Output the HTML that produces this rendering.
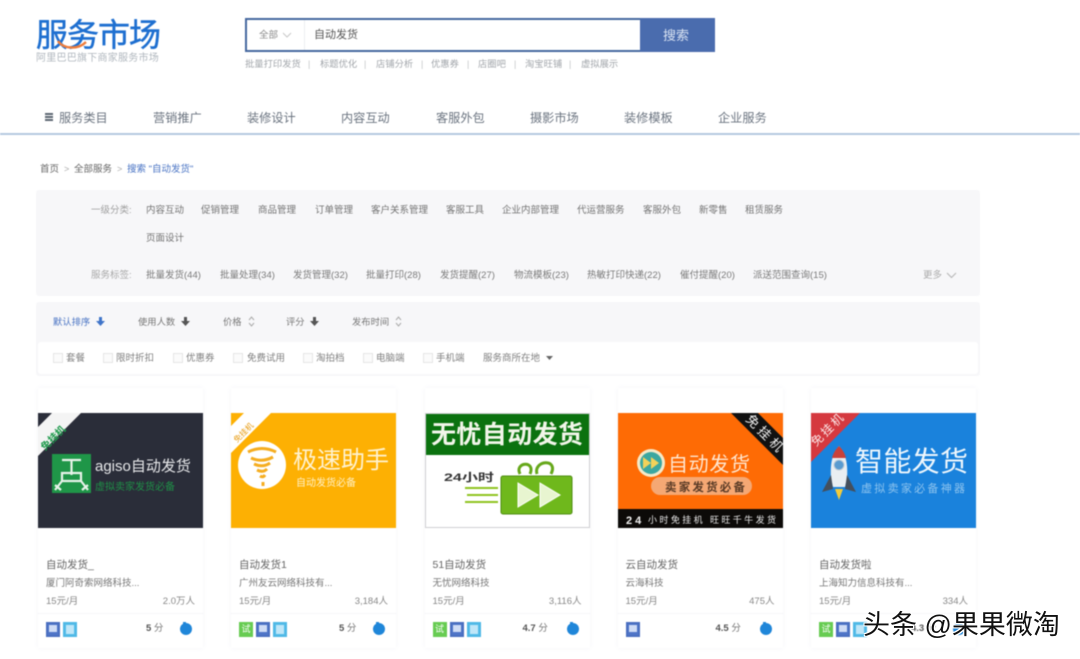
<!DOCTYPE html>
<html lang="zh">
<head>
<meta charset="utf-8">
<style>
html,body{margin:0;padding:0;background:#fff}
#p{position:relative;width:1080px;height:659px;overflow:hidden;background:#fff;font-family:"Liberation Sans","Noto Sans CJK SC",sans-serif;color:#666}
.t{position:absolute;white-space:nowrap;line-height:1}
.b{position:absolute}
.f{filter:blur(.6px)}
.n{font-size:12.2px;color:#6b7480;top:112px}
.h{font-size:9.3px;color:#a2a6ab;top:60px}
.s{font-size:9px;color:#c4c6c9;top:60px}
.c1{font-size:9.500px;color:#747474;top:206px}
.c2{font-size:9.500px;color:#7a7a7a;top:271px}
.o{font-size:9.300px;color:#777;top:318px}
.k{font-size:9.500px;color:#808080;top:354px}
.cb{position:absolute;top:353px;width:8px;height:8px;border:1px solid #e6e6e6;background:#fbfbfb}
.card{position:absolute;top:388px;width:165px;height:260px;background:#fff;box-shadow:0 0 5px #f3f4f8}
.img{position:absolute;left:0;top:25px;width:165px;height:115px;overflow:hidden}
.ti{position:absolute;left:8px;top:172px;font-size:10.500px;color:#666;line-height:1;white-space:nowrap}
.co{position:absolute;left:8px;top:191px;font-size:9.500px;color:#777;line-height:1;white-space:nowrap}
.pr{position:absolute;left:8px;top:209px;font-size:9.500px;color:#888;line-height:1;white-space:nowrap}
.us{position:absolute;right:8px;top:209px;font-size:9.500px;color:#888;line-height:1;white-space:nowrap}
.ln{position:absolute;left:0;right:0;top:225px;height:1px;background:#f6f6f8}
.ic{position:absolute;top:234px;width:14px;height:15px;box-sizing:border-box;line-height:14px;text-align:center;font-size:9px;color:#fff}
.i1{background:#4f75c8;border:2px solid #4a6fc0}
.i1:after,.i2:after{content:"";position:absolute;left:1px;top:1px;width:8px;height:7px;background:#cfdcf5}
.i2{background:#55bde9;border:2px solid #4fb8e6}
.i2:after{background:#bfe6f8;height:9px}
.i3{background:#67cc52}
.sc{position:absolute;top:236px;font-size:9.500px;color:#777;line-height:1;white-space:nowrap}
.sc b{color:#555}
.dot{position:absolute;left:142px;top:235px;width:12px;height:12px;border-radius:50%;background:#1f86d9}
.dot:before{content:"";position:absolute;left:3px;top:-1px;width:3px;height:3px;background:#1f86d9}
svg text{font-family:"Liberation Sans","Noto Sans CJK SC",sans-serif}
</style>
</head>
<body>
<div id="p">
<div class="f">
  <!-- logo -->
  <div class="t" style="left:36px;top:19px;font-size:32px;letter-spacing:-1px;color:#1e6fd0;font-weight:400;-webkit-text-stroke:.5px #1e6fd0">服务市场</div>
  <svg class="b" style="left:56px;top:38px" width="34" height="14"><path d="M2 3C7 11 22 12 30 4" stroke="#ee7d3c" stroke-width="2.400" fill="none"/></svg>
  <div class="t" style="left:36px;top:54px;font-size:10px;color:#b0b7be;letter-spacing:.25px">阿里巴巴旗下商家服务市场</div>

  <!-- search -->
  <div class="b" style="left:245px;top:18px;width:395px;height:34px;box-sizing:border-box;border:2px solid #46689f;border-right:0;background:#fff"></div>
  <div class="b" style="left:640px;top:18px;width:75px;height:34px;background:#4a6cae"></div>
  <div class="b" style="left:304px;top:20px;width:1px;height:30px;background:#eceef1"></div>
  <div class="t" style="left:259px;top:31px;font-size:9.500px;color:#8a8a8a">全部</div>
  <svg class="b" style="left:282px;top:32px" width="10" height="7"><path d="M1 1l4 4 4-4" stroke="#c8c8c8" fill="none"/></svg>
  <div class="t" style="left:314px;top:30px;font-size:11px;color:#555">自动发货</div>
  <div class="t" style="left:663px;top:29px;font-size:13px;color:#d8e2f2">搜索</div>
  <div class="t h" style="left:245px">批量打印发货</div><div class="t s" style="left:308px">|</div>
  <div class="t h" style="left:320px">标题优化</div><div class="t s" style="left:364px">|</div>
  <div class="t h" style="left:376px">店铺分析</div><div class="t s" style="left:421px">|</div>
  <div class="t h" style="left:431px">优惠券</div><div class="t s" style="left:467px">|</div>
  <div class="t h" style="left:478px">店圈吧</div><div class="t s" style="left:514px">|</div>
  <div class="t h" style="left:525px">淘宝旺铺</div><div class="t s" style="left:569px">|</div>
  <div class="t h" style="left:581px">虚拟展示</div>

  <!-- nav -->
  <div class="b" style="left:45px;top:113px;width:8px;height:1.500px;background:#5c6672"></div>
  <div class="b" style="left:45px;top:116px;width:8px;height:1.500px;background:#5c6672"></div>
  <div class="b" style="left:45px;top:119px;width:8px;height:1.500px;background:#5c6672"></div>
  <div class="t n" style="left:59px">服务类目</div>
  <div class="t n" style="left:153px">营销推广</div>
  <div class="t n" style="left:247px">装修设计</div>
  <div class="t n" style="left:341px">内容互动</div>
  <div class="t n" style="left:436px">客服外包</div>
  <div class="t n" style="left:530px">摄影市场</div>
  <div class="t n" style="left:624px">装修模板</div>
  <div class="t n" style="left:718px">企业服务</div>
  <div class="b" style="left:0;top:133px;width:1080px;height:1.500px;background:#b5c9e0"></div>

  <!-- breadcrumb -->
  <div class="t" style="left:40px;top:165px;font-size:9.500px;color:#666">首页</div>
  <div class="t" style="left:64px;top:165px;font-size:9px;color:#aaa">&gt;</div>
  <div class="t" style="left:74px;top:165px;font-size:9.500px;color:#666">全部服务</div>
  <div class="t" style="left:117px;top:165px;font-size:9px;color:#aaa">&gt;</div>
  <div class="t" style="left:127px;top:165px;font-size:9.500px;color:#4a74c4">搜索 "自动发货"</div>

  <!-- filter block -->
  <div class="b" style="left:36px;top:190px;width:944px;height:106px;background:#f7f7f9;border-radius:3px"></div>
  <div class="t c1" style="left:91px;color:#a0a0a0">一级分类:</div>
  <div class="t c1" style="left:146px">内容互动</div>
  <div class="t c1" style="left:201px">促销管理</div>
  <div class="t c1" style="left:258px">商品管理</div>
  <div class="t c1" style="left:315px">订单管理</div>
  <div class="t c1" style="left:371px">客户关系管理</div>
  <div class="t c1" style="left:446px">客服工具</div>
  <div class="t c1" style="left:502px">企业内部管理</div>
  <div class="t c1" style="left:577px">代运营服务</div>
  <div class="t c1" style="left:643px">客服外包</div>
  <div class="t c1" style="left:699px">新零售</div>
  <div class="t c1" style="left:745px">租赁服务</div>
  <div class="t c1" style="left:146px;top:234px">页面设计</div>
  <div class="t c2" style="left:91px;color:#a8a8a8">服务标签:</div>
  <div class="t c2" style="left:146px">批量发货(44)</div>
  <div class="t c2" style="left:220px">批量处理(34)</div>
  <div class="t c2" style="left:293px">发货管理(32)</div>
  <div class="t c2" style="left:366px">批量打印(28)</div>
  <div class="t c2" style="left:440px">发货提醒(27)</div>
  <div class="t c2" style="left:514px">物流模板(23)</div>
  <div class="t c2" style="left:587px">热敏打印快递(22)</div>
  <div class="t c2" style="left:680px">催付提醒(20)</div>
  <div class="t c2" style="left:753px">派送范围查询(15)</div>
  <div class="t c2" style="left:923px;color:#aaa">更多</div>
  <svg class="b" style="left:946px;top:272px" width="11" height="7"><path d="M1 1l4.500 4.500L10 1" stroke="#b5b5b5" fill="none"/></svg>

  <!-- sort block -->
  <div class="b" style="left:36px;top:302px;width:944px;height:74px;background:#f7f7f9;border-radius:3px"></div>
  <div class="b" style="left:38px;top:342px;width:940px;height:32px;background:#fff;border-radius:3px"></div>
  <div class="t o" style="left:53px;color:#4a74c4">默认排序</div>
  <svg class="b" style="left:96px;top:317px" width="9" height="10"><path d="M3 0h3v4h3L4.500 9 0 4h3z" fill="#3f74c9"/></svg>
  <div class="t o" style="left:138px">使用人数</div>
  <svg class="b" style="left:181px;top:317px" width="9" height="10"><path d="M3 0h3v4h3L4.500 9 0 4h3z" fill="#555"/></svg>
  <div class="t o" style="left:223px">价格</div>
  <svg class="b" style="left:248px;top:316px" width="7" height="11"><path d="M1 4l2.500-3L6 4M1 7l2.500 3L6 7" stroke="#aaa" fill="none"/></svg>
  <div class="t o" style="left:286px">评分</div>
  <svg class="b" style="left:310px;top:317px" width="9" height="10"><path d="M3 0h3v4h3L4.500 9 0 4h3z" fill="#555"/></svg>
  <div class="t o" style="left:352px">发布时间</div>
  <svg class="b" style="left:395px;top:316px" width="7" height="11"><path d="M1 4l2.500-3L6 4M1 7l2.500 3L6 7" stroke="#aaa" fill="none"/></svg>

  <div class="cb" style="left:53px"></div><div class="t k" style="left:66px">套餐</div>
  <div class="cb" style="left:103px"></div><div class="t k" style="left:116px">限时折扣</div>
  <div class="cb" style="left:173px"></div><div class="t k" style="left:186px">优惠券</div>
  <div class="cb" style="left:233px"></div><div class="t k" style="left:247px">免费试用</div>
  <div class="cb" style="left:303px"></div><div class="t k" style="left:316px">淘拍档</div>
  <div class="cb" style="left:363px"></div><div class="t k" style="left:376px">电脑端</div>
  <div class="cb" style="left:423px"></div><div class="t k" style="left:436px">手机端</div>
  <div class="t k" style="left:483px">服务商所在地</div>
  <svg class="b" style="left:546px;top:356px" width="7" height="5"><path d="M0 0h7L3.500 4z" fill="#666"/></svg>

  <!-- card 1 -->
  <div class="card" style="left:38px">
    <div class="img" style="background:#2a2d39">
      <svg width="165" height="115">
        <path d="M0 14L14 0H43L0 43Z" fill="#f4f4f4"/>
        <text transform="translate(7 38) rotate(-45)" font-size="10" font-weight="bold" fill="#1f9a4c">免挂机</text>
        <rect x="14" y="41" width="39" height="39" fill="#1f9648"/>
        <path d="M24 47h19M33.500 47v15M24 60h19v8H24zM24 68l-7 9M43 68l7 9M17 72l6 5M50 72l-6 5" stroke="#e8f3ea" stroke-width="2.200" fill="none"/>
        <text x="57" y="58" font-size="15" fill="#e7e8ea">agiso自动发货</text>
        <text x="57" y="77" font-size="10" fill="#1f8f47">虚拟卖家发货必备</text>
      </svg>
    </div>
    <div class="ti">自动发货_</div><div class="co">厦门阿奇索网络科技...</div><div class="pr">15元/月</div><div class="us">2.0万人</div><div class="ln"></div>
    <div class="ic i1" style="left:8px"></div><div class="ic i2" style="left:25px"></div>
    <div class="sc" style="left:108px"><b>5</b> 分</div><div class="dot"></div>
  </div>

  <!-- card 2 -->
  <div class="card" style="left:231px">
    <div class="img" style="background:#fdb003">
      <svg width="165" height="115">
        <path d="M0 13L13 0H40L0 40Z" fill="#fff"/>
        <text transform="translate(6 30) rotate(-45)" font-size="8" fill="#e89c12">免挂机</text>
        <circle cx="31" cy="52" r="24" fill="#fff"/>
        <path d="M17 39q14 -7 28 0M20 45q11 5 22 -1M23 51q9 4 16 -1M26 57q6 3 10 -1M29 63q3 2 5 -1M32 69l0 4" stroke="#f5ad20" stroke-width="3" fill="none"/>
        <text x="62" y="55" font-size="24" fill="#fff2cf">极速助手</text>
        <text x="65" y="73" font-size="10" fill="#fff0c4">自动发货必备</text>
      </svg>
    </div>
    <div class="ti">自动发货1</div><div class="co">广州友云网络科技有...</div><div class="pr">15元/月</div><div class="us">3,184人</div><div class="ln"></div>
    <div class="ic i3" style="left:8px">试</div><div class="ic i1" style="left:25px"></div><div class="ic i2" style="left:42px"></div>
    <div class="sc" style="left:108px"><b>5</b> 分</div><div class="dot"></div>
  </div>

  <!-- card 3 -->
  <div class="card" style="left:424.500px">
    <div class="img" style="background:#fff;outline:1px solid #cfcfd2;outline-offset:-1px">
      <svg width="165" height="115">
        <rect width="165" height="42" fill="#0b720f"/>
        <text x="6" y="30" font-size="25" font-weight="bold" fill="#f2f6ea" textLength="152">无忧自动发货</text>
        <text x="19" y="68" font-size="11" font-weight="bold" fill="#333" textLength="50" lengthAdjust="spacingAndGlyphs">24小时</text>
        <path d="M40 75h33M42 82h31M40 89h33" stroke="#8fc31f" stroke-width="2"/>
        <path d="M95 61c-6-12 16-14 10 0M112 61c-4-14 22-16 14 0" stroke="#66a81a" stroke-width="3" fill="none"/>
        <rect x="76" y="63" width="71" height="38" rx="2" fill="#6fb81c" stroke="#4f8d12"/>
        <path d="M93 70l20 12-20 12z M115 70l20 12-20 12z" fill="#e8f5d0" stroke="#fff"/>
      </svg>
    </div>
    <div class="ti">51自动发货</div><div class="co">无忧网络科技</div><div class="pr">15元/月</div><div class="us">3,116人</div><div class="ln"></div>
    <div class="ic i3" style="left:8px">试</div><div class="ic i1" style="left:25px"></div><div class="ic i2" style="left:42px"></div>
    <div class="sc" style="left:98px"><b>4.7</b> 分</div><div class="dot"></div>
  </div>

  <!-- card 4 -->
  <div class="card" style="left:617.500px">
    <div class="img" style="background:#fe6b05">
      <svg width="165" height="115">
        <path d="M113 0H140L165 25V52Z" fill="#111"/>
        <text transform="translate(127 7) rotate(45)" font-size="13" fill="#f2f2f2" textLength="46">免挂机</text>
        <circle cx="33" cy="50" r="14" fill="#f5e9c8"/>
        <circle cx="33" cy="50" r="11" fill="#3ca7a0"/>
        <path d="M25 44l8 6-8 6zM33 44l8 6-8 6z" fill="#f3d25a"/>
        <text x="50" y="58" font-size="20" fill="#ffe6cf" textLength="82">自动发货</text>
        <rect x="33" y="64" width="101" height="18" rx="9" fill="#f5a874"/>
        <text x="47" y="78" font-size="11.500" font-weight="bold" fill="#5a3b26" textLength="80">卖家发货必备</text>
        <rect y="96" width="165" height="19" fill="#0c0a08"/>
        <text x="8" y="111" font-size="11" font-weight="bold" fill="#f2f2f2">2 4</text>
        <text x="30" y="110" font-size="9" fill="#e8e8e8" textLength="128">小时免挂机 旺旺千牛发货</text>
      </svg>
    </div>
    <div class="ti">云自动发货</div><div class="co">云海科技</div><div class="pr">15元/月</div><div class="us">475人</div><div class="ln"></div>
    <div class="ic i1" style="left:8px"></div>
    <div class="sc" style="left:98px"><b>4.5</b> 分</div><div class="dot"></div>
  </div>

  <!-- card 5 -->
  <div class="card" style="left:811px">
    <div class="img" style="background:#1a82dc">
      <svg width="165" height="115">
        <path d="M0 0H49L0 49Z" fill="#d5393f"/>
        <text transform="translate(5 34) rotate(-45)" font-size="12" fill="#fbe8e8" textLength="40">免挂机</text>
        <path d="M28 33c-7 8-9 18-8 33l2 8h12l2-8c1-15-1-25-8-33z" fill="#e9eef2"/>
        <path d="M28 33c-4 4-6 8-7 12h14c-1-4-3-8-7-12z" fill="#c9413a"/>
        <circle cx="28" cy="52" r="5" fill="#5a9bd0" stroke="#c0ccd6"/>
        <path d="M20 62l-9 17 11-3zM36 62l9 17-11-3z" fill="#444f5c"/>
        <path d="M24 76h8l-4 11z" fill="#f3cb3a"/>
        <text x="44" y="58" font-size="28" fill="#eef7fd" textLength="113">智能发货</text>
        <text x="50" y="79" font-size="11" fill="#8cc3ee" textLength="104">虚拟卖家必备神器</text>
      </svg>
    </div>
    <div class="ti">自动发货啦</div><div class="co">上海知力信息科技有...</div><div class="pr">15元/月</div><div class="us">334人</div><div class="ln"></div>
    <div class="ic i3" style="left:8px">试</div><div class="ic i1" style="left:25px"></div><div class="ic i2" style="left:42px"></div>
    <div class="sc" style="left:100px"><b>4.3</b> 分</div><div class="dot"></div>
  </div>
</div>

<!-- watermark -->
<div class="t" style="left:863px;top:612px;font-size:27px;color:#111;text-shadow:0 0 2px #fff,1px 1px 0 #fff,-1px -1px 0 #fff,1px -1px 0 #fff,-1px 1px 0 #fff">头条 @果果微淘</div>
</div>
</body>
</html>
